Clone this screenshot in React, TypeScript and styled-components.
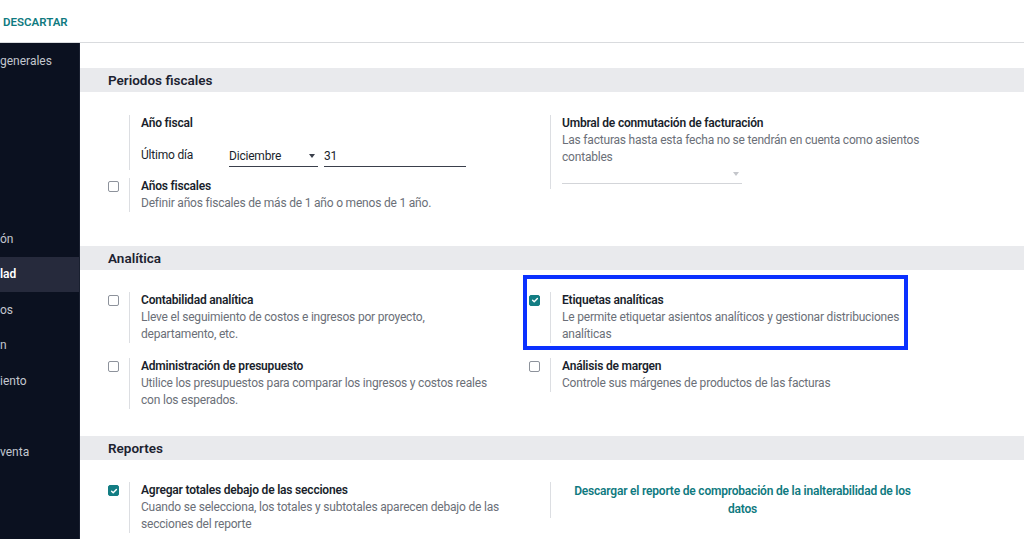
import React from "react";
import styled, { createGlobalStyle } from "styled-components";

const GlobalStyle = createGlobalStyle`
  html, body { margin: 0; padding: 0; background: #ffffff; }
  body {
    font-family: Roboto, "Noto Sans", "Liberation Sans", sans-serif;
    color: #1f2330;
    -webkit-font-smoothing: antialiased;
  }
  * { box-sizing: border-box; }
`;

const teal = "#0f7a80";

const Page = styled.div`
  width: 1024px;
  height: 539px;
  overflow: hidden;
  display: flex;
  flex-direction: column;
`;

const TopBar = styled.div`
  height: 43px;
  flex: none;
  display: flex;
  align-items: center;
  padding-left: 3px;
  border-bottom: 1px solid #d9dbde;
`;

const DiscardButton = styled.button`
  border: 0;
  background: none;
  padding: 0;
  margin-top: 1px;
  font-family: inherit;
  font-size: 11.5px;
  font-weight: 600;
  color: ${teal};
  cursor: pointer;
`;

const Body = styled.div`
  flex: 1;
  display: flex;
  min-height: 0;
`;

const Sidebar = styled.nav`
  width: 80px;
  flex: none;
  background: #0b1120;
  border-right: 1px solid #1a2030;
  display: flex;
  flex-direction: column;
`;

const NavItem = styled.div<{ $active?: boolean; $gap?: number }>`
  height: 35.5px;
  flex: none;
  margin-top: ${(p) => p.$gap ?? 0}px;
  display: flex;
  align-items: center;
  font-size: 12px;
  white-space: nowrap;
  color: ${(p) => (p.$active ? "#ffffff" : "#c3c7cf")};
  font-weight: ${(p) => (p.$active ? 600 : 400)};
  background: ${(p) => (p.$active ? "#262a3c" : "transparent")};
`;

const Main = styled.main`
  flex: 1;
  padding-top: 25px;
  position: relative;
`;

const SectionHeader = styled.h2`
  margin: 0;
  height: 24px;
  display: flex;
  align-items: center;
  padding-left: 28px;
  background: #e9eaed;
  font-size: 13.5px;
  font-weight: 600;
  color: #1c2230;
`;

const SettingsGrid = styled.div<{ $top: number; $bottom: number }>`
  display: grid;
  grid-template-columns: 421px 421px;
  padding: ${(p) => p.$top}px 0 ${(p) => p.$bottom}px 28px;
`;

const Column = styled.div<{ $gap?: number }>`
  display: flex;
  flex-direction: column;
  gap: ${(p) => p.$gap ?? 15}px;
`;

const Setting = styled.div`
  display: flex;
  align-items: stretch;
`;

const CheckCell = styled.div`
  width: 21px;
  flex: none;
  padding-top: 3px;
`;

const CheckBox = styled.span<{ $checked?: boolean }>`
  display: flex;
  align-items: center;
  justify-content: center;
  width: 11px;
  height: 11px;
  border-radius: 2px;
  border: 1px solid ${(p) => (p.$checked ? "#137d83" : "#8d929b")};
  background: ${(p) => (p.$checked ? "#137d83" : "#ffffff")};
`;

const Content = styled.div<{ $center?: boolean }>`
  width: 377px;
  border-left: 1px solid #dcdee2;
  padding-left: 11px;
  padding-right: 4px;
  letter-spacing: -0.2px;
  text-align: ${(p) => (p.$center ? "center" : "left")};
`;

const Title = styled.div`
  font-size: 12px;
  line-height: 17px;
  font-weight: 600;
  color: #1a1f2c;
`;

const Description = styled.div`
  font-size: 12px;
  line-height: 17px;
  color: #6b6f78;
`;

const FieldRow = styled.div`
  display: flex;
  align-items: flex-end;
  margin-top: 13px;
  height: 22px;
`;

const FieldLabel = styled.span`
  width: 88px;
  font-size: 12px;
  line-height: 17px;
  color: #1a1f2c;
  padding-bottom: 3px;
`;

const Select = styled.div<{ $width: number; $muted?: boolean }>`
  width: ${(p) => p.$width}px;
  height: 20px;
  display: flex;
  align-items: center;
  justify-content: space-between;
  border-bottom: 1px solid ${(p) => (p.$muted ? "#d3d5d9" : "#3a3f4b")};
  font-size: 12px;
  color: #1a1f2c;
  padding-right: 3px;
`;

const Caret = styled.span<{ $muted?: boolean }>`
  width: 0;
  height: 0;
  border-left: 3.5px solid transparent;
  border-right: 3.5px solid transparent;
  border-top: 4px solid ${(p) => (p.$muted ? "#c4c6cb" : "#3a3f4b")};
`;

const TextInput = styled.div`
  margin-left: 6px;
  width: 142px;
  height: 20px;
  display: flex;
  align-items: center;
  border-bottom: 1px solid #3a3f4b;
  font-size: 12px;
  color: #1a1f2c;
`;

const EmptySelect = styled(Select)`
  margin-top: 0;
  height: 18px;
`;

const Link = styled.a`
  display: block;
  font-size: 12px;
  line-height: 18px;
  font-weight: 600;
  color: ${teal};
  text-decoration: none;
  padding: 0 8px;
`;

const Highlight = styled.div`
  position: absolute;
  left: 443px;
  top: 232px;
  width: 385px;
  height: 75px;
  border: 4px solid #0b31ff;
  pointer-events: none;
`;

const Check = () => (
  <svg width="8" height="8" viewBox="0 0 8 8">
    <path d="M1.6 4.2 L3.2 5.7 L6.4 2.4" fill="none" stroke="#ffffff" strokeWidth="1.4" strokeLinecap="round" strokeLinejoin="round" />
  </svg>
);

type Opt = { title: string; desc?: string; checked?: boolean; box?: boolean };

const Option = ({ title, desc, checked, box = true }: Opt) => (
  <Setting>
    <CheckCell>{box && <CheckBox $checked={checked}>{checked && <Check />}</CheckBox>}</CheckCell>
    <Content>
      <Title>{title}</Title>
      {desc && <Description>{desc}</Description>}
    </Content>
  </Setting>
);

export default function App() {
  return (
    <Page>
      <GlobalStyle />
      <TopBar>
        <DiscardButton>DESCARTAR</DiscardButton>
      </TopBar>
      <Body>
        <Sidebar>
          <NavItem>generales</NavItem>
          <NavItem $gap={142.5}>ón</NavItem>
          <NavItem $active>lad</NavItem>
          <NavItem>os</NavItem>
          <NavItem>n</NavItem>
          <NavItem>iento</NavItem>
          <NavItem $gap={35.5}>venta</NavItem>
        </Sidebar>
        <Main>
          <SectionHeader>Periodos fiscales</SectionHeader>
          <SettingsGrid $top={22.5} $bottom={34.5}>
            <Column $gap={8}>
              <Setting>
                <CheckCell />
                <Content>
                  <Title>Año fiscal</Title>
                  <FieldRow>
                    <FieldLabel>Último día</FieldLabel>
                    <Select $width={89}>
                      <span>Diciembre</span>
                      <Caret />
                    </Select>
                    <TextInput>31</TextInput>
                  </FieldRow>
                  <div style={{ height: 3 }} />
                </Content>
              </Setting>
              <Option title="Años fiscales" desc="Definir años fiscales de más de 1 año o menos de 1 año." />
            </Column>
            <Column>
              <Setting>
                <CheckCell />
                <Content>
                  <Title>Umbral de conmutación de facturación</Title>
                  <Description>Las facturas hasta esta fecha no se tendrán en cuenta como asientos contables</Description>
                  <EmptySelect $width={180} $muted>
                    <span />
                    <Caret $muted />
                  </EmptySelect>
                  <div style={{ height: 5 }} />
                </Content>
              </Setting>
            </Column>
          </SettingsGrid>

          <SectionHeader>Analítica</SectionHeader>
          <SettingsGrid $top={21.5} $bottom={27.5}>
            <Column>
              <Option title="Contabilidad analítica" desc="Lleve el seguimiento de costos e ingresos por proyecto, departamento, etc." />
              <Option title="Administración de presupuesto" desc="Utilice los presupuestos para comparar los ingresos y costos reales con los esperados." />
            </Column>
            <Column>
              <Option checked title="Etiquetas analíticas" desc="Le permite etiquetar asientos analíticos y gestionar distribuciones analíticas" />
              <Option title="Análisis de margen" desc="Controle sus márgenes de productos de las facturas" />
            </Column>
          </SettingsGrid>

          <SectionHeader>Reportes</SectionHeader>
          <SettingsGrid $top={22} $bottom={20}>
            <Column>
              <Option checked title="Agregar totales debajo de las secciones" desc="Cuando se selecciona, los totales y subtotales aparecen debajo de las secciones del reporte" />
            </Column>
            <Column>
              <Setting>
                <CheckCell />
                <Content $center>
                  <Link href="#">Descargar el reporte de comprobación de la inalterabilidad de los datos</Link>
                </Content>
              </Setting>
            </Column>
          </SettingsGrid>
          <Highlight />
        </Main>
      </Body>
    </Page>
  );
}
